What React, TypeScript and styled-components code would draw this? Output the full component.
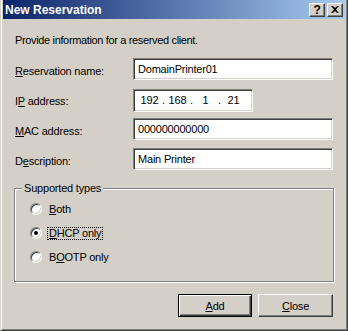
import styled, { createGlobalStyle } from "styled-components";

const GlobalStyle = createGlobalStyle`
  html, body {
    margin: 0;
    padding: 0;
    background: #d4d0c8;
  }
  * {
    box-sizing: border-box;
  }
`;

const face = "#d4d0c8";
const shadow = "#808080";
const dark = "#404040";

export default function App() {
  return (
    <>
      <GlobalStyle />
      <Window>
        <TitleBar>
          <Title>New Reservation</Title>
          <TitleButtons>
            <CaptionButton>?</CaptionButton>
            <CaptionButton>
              <svg width="8" height="7" viewBox="0 0 8 7">
                <path d="M0 0h2l2 2 2-2h2L5 3.5 8 7H6L4 5 2 7H0l3-3.5z" fill="#000" />
              </svg>
            </CaptionButton>
          </TitleButtons>
        </TitleBar>

        <Body>
          <Intro>Provide information for a reserved client.</Intro>

          <Fields>
            <Row>
              <Label><u>R</u>eservation name:</Label>
              <TextBox $width={200}>DomainPrinter01</TextBox>
            </Row>
            <Row>
              <Label>I<u>P</u> address:</Label>
              <IpBox>
                <Octet>192</Octet>
                <Dot>.</Dot>
                <Octet>168</Octet>
                <Dot>.</Dot>
                <Octet>1</Octet>
                <Dot>.</Dot>
                <Octet>21</Octet>
              </IpBox>
            </Row>
            <Row>
              <Label><u>M</u>AC address:</Label>
              <TextBox $width={200}>000000000000</TextBox>
            </Row>
            <Row>
              <Label>D<u>e</u>scription:</Label>
              <TextBox $width={200}>Main Printer</TextBox>
            </Row>
          </Fields>

          <GroupBox>
            <GroupCaption>Supported types</GroupCaption>
            <RadioItem>
              <Radio />
              <RadioText><u>B</u>oth</RadioText>
            </RadioItem>
            <RadioItem>
              <Radio $checked />
              <RadioText $focused><u>D</u>HCP only</RadioText>
            </RadioItem>
            <RadioItem>
              <Radio />
              <RadioText>B<u>O</u>OTP only</RadioText>
            </RadioItem>
          </GroupBox>

          <Buttons>
            <Button $default><u>A</u>dd</Button>
            <Button><u>C</u>lose</Button>
          </Buttons>
        </Body>
      </Window>
    </>
  );
}

const Window = styled.div`
  width: 348px;
  height: 331px;
  background: ${face};
  border-left: 1px solid ${face};
  border-right: 1px solid ${dark};
  border-bottom: 1px solid ${dark};
  box-shadow: inset 1px 0 #fff, inset -1px -1px ${shadow};
  padding: 0 2px 2px 2px;
  display: flex;
  flex-direction: column;
  font-family: "Liberation Sans", Arial, sans-serif;
  font-size: 11px;
  letter-spacing: -0.2px;
  color: #000;
`;

const TitleBar = styled.div`
  height: 19px;
  display: flex;
  align-items: center;
  justify-content: space-between;
  padding: 0 2px 0 2px;
  background: linear-gradient(to right, #0a246a, #a6caf0);
`;

const Title = styled.div`
  color: #fff;
  font-weight: bold;
  font-size: 12px;
  letter-spacing: 0;
`;

const TitleButtons = styled.div`
  display: flex;
  gap: 2px;
`;

const CaptionButton = styled.div`
  width: 16px;
  height: 14px;
  background: ${face};
  border-top: 1px solid #fff;
  border-left: 1px solid #fff;
  border-right: 1px solid ${dark};
  border-bottom: 1px solid ${dark};
  box-shadow: inset -1px -1px ${shadow};
  display: flex;
  align-items: center;
  justify-content: center;
  font-weight: bold;
  font-size: 12px;
  line-height: 1;
`;

const Body = styled.div`
  flex: 1;
  display: flex;
  flex-direction: column;
  padding: 14px 12px 0 11px;
`;

const Intro = styled.div`
  line-height: 14px;
  padding-left: 1px;
  letter-spacing: -0.35px;
`;

const Fields = styled.div`
  display: flex;
  flex-direction: column;
  gap: 8px;
  margin-top: 11px;
`;

const Row = styled.div`
  display: flex;
  align-items: center;
  height: 22px;
`;

const Label = styled.div`
  width: 119px;
  padding-left: 1px;
  padding-top: 3px;
`;

const sunken = `
  background: #fff;
  border-top: 1px solid ${shadow};
  border-left: 1px solid ${shadow};
  border-right: 1px solid #fff;
  border-bottom: 1px solid #fff;
  box-shadow: inset 1px 1px ${dark}, inset -1px -1px ${face};
`;

const TextBox = styled.div<{ $width: number }>`
  ${sunken}
  width: ${(p) => p.$width}px;
  height: 22px;
  padding: 0 4px;
  display: flex;
  align-items: center;
`;

const IpBox = styled.div`
  ${sunken}
  width: 120px;
  height: 23px;
  margin-top: 2px;
  padding: 0 4px 0 6px;
  display: flex;
  align-items: center;
`;

const Octet = styled.span`
  width: 19px;
  text-align: center;
`;

const Dot = styled.span`
  width: 9px;
  text-align: center;
`;

const GroupBox = styled.div`
  position: relative;
  margin-top: 18px;
  width: 320px;
  height: 94px;
  border: 1px solid ${shadow};
  box-shadow: inset 1px 1px #fff, 1px 1px #fff;
  padding: 13px 0 0 15px;
  display: flex;
  flex-direction: column;
  gap: 10px;
`;

const GroupCaption = styled.div`
  position: absolute;
  top: -7px;
  left: 7px;
  padding: 0 2px;
  background: ${face};
  line-height: 13px;
`;

const RadioItem = styled.div`
  display: flex;
  align-items: center;
  height: 14px;
  gap: 5px;
`;

const Radio = styled.div<{ $checked?: boolean }>`
  width: 12px;
  height: 12px;
  border-radius: 50%;
  background: #fff;
  border: 1px solid;
  border-color: ${shadow} #fff #fff ${shadow};
  box-shadow: inset 1px 1px ${dark}, inset -1px -1px ${face};
  display: flex;
  align-items: center;
  justify-content: center;
  &::after {
    content: "";
    display: ${(p) => (p.$checked ? "block" : "none")};
    width: 4px;
    height: 4px;
    border-radius: 50%;
    background: #000;
  }
`;

const RadioText = styled.div<{ $focused?: boolean }>`
  padding: 0 1px;
  line-height: 11px;
  border: 1px dotted ${(p) => (p.$focused ? "#000" : "transparent")};
`;

const Buttons = styled.div`
  display: flex;
  justify-content: flex-end;
  gap: 6px;
  margin-top: 12px;
`;

const Button = styled.div<{ $default?: boolean }>`
  width: ${(p) => (p.$default ? 74 : 75)}px;
  height: 23px;
  display: flex;
  align-items: center;
  justify-content: center;
  background: ${face};
  border: 1px solid;
  border-color: ${(p) => (p.$default ? "#000" : `#fff ${dark} ${dark} #fff`)};
  box-shadow: ${(p) =>
    p.$default
      ? `inset 1px 1px #fff, inset -1px -1px ${dark}, inset -2px -2px ${shadow}`
      : `inset -1px -1px ${shadow}`};
`;
